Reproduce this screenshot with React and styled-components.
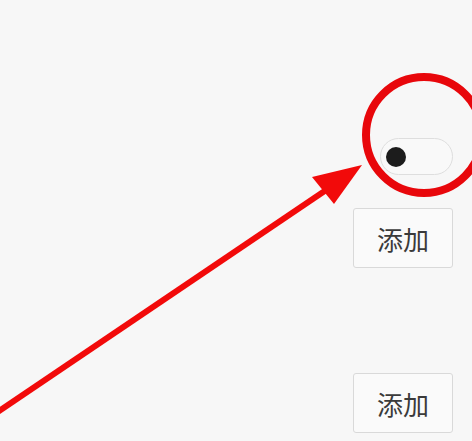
import styled, { createGlobalStyle } from "styled-components";

const Global = createGlobalStyle`
  html, body { margin: 0; padding: 0; background: #f7f7f7; }
  body { font-family: "Noto Sans CJK SC", "Noto Sans", sans-serif; }
`;

const Page = styled.div`
  position: relative;
  width: 472px;
  height: 441px;
  overflow: hidden;
  background: #f7f7f7;
  display: flex;
  justify-content: flex-end;
  padding: 138px 19px 0 0;
  box-sizing: border-box;
`;

const Column = styled.div`
  display: flex;
  flex-direction: column;
  align-items: flex-end;
`;

const Toggle = styled.div`
  width: 73px;
  height: 37px;
  box-sizing: border-box;
  border: 1.5px solid #dedede;
  border-radius: 19px;
  background: #f9f9f9;
  display: flex;
  align-items: center;
  padding-left: 5px;
  margin-bottom: 33px;
`;

const Knob = styled.span`
  width: 20px;
  height: 20px;
  border-radius: 50%;
  background: #1c1c1c;
`;

const AddButton = styled.button`
  width: 100px;
  height: 60px;
  box-sizing: border-box;
  border: 1.5px solid #d9d9d9;
  border-radius: 3px;
  background: #fafafa;
  color: #3a3a3a;
  font-family: "Noto Sans CJK SC", sans-serif;
  font-size: 26px;
  padding: 0;
  margin-bottom: ${(p) => p.$gap || 0}px;
`;

const Overlay = styled.svg`
  position: absolute;
  left: 0;
  top: 0;
  pointer-events: none;
`;

export default function App() {
  return (
    <>
      <Global />
      <Page>
        <Column>
          <Toggle>
            <Knob />
          </Toggle>
          <AddButton $gap={105}>添加</AddButton>
          <AddButton>添加</AddButton>
        </Column>
        <Overlay width="472" height="441" viewBox="0 0 472 441">
          <circle cx="424" cy="135" r="58" fill="none" stroke="#e8070b" strokeWidth="8" />
          <line x1="-4" y1="413" x2="335" y2="184" stroke="#f20a0a" strokeWidth="6" />
          <polygon points="362,165 312,177 334,204" fill="#f20a0a" />
        </Overlay>
      </Page>
    </>
  );
}
